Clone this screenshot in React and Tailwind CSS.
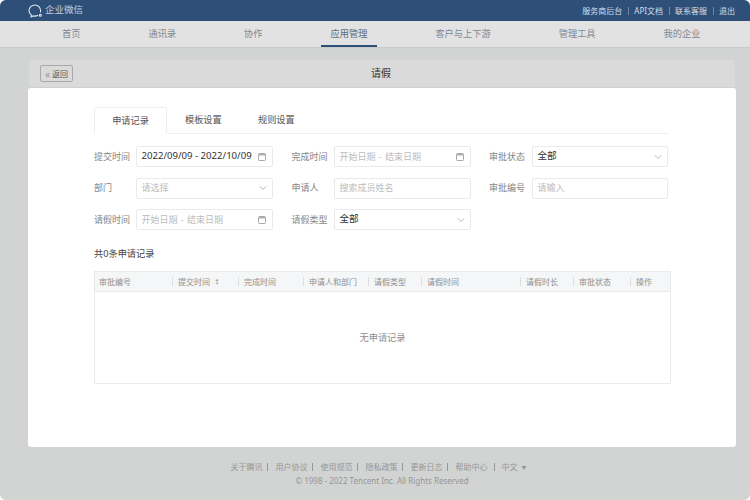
import { ChevronDown } from 'lucide-react'

const nav = ['首页', '通讯录', '协作', '应用管理', '客户与上下游', '管理工具', '我的企业']
const topLinks = ['服务商后台', 'API文档', '联系客服', '退出']
const tabs = ['申请记录', '模板设置', '规则设置']
const footerLinks = ['关于腾讯', '用户协议', '使用规范', '隐私政策', '更新日志', '帮助中心']

const columns = [
  { label: '审批编号', w: 'w-[77px]' },
  { label: '提交时间', w: 'w-[66px]', sort: true },
  { label: '完成时间', w: 'w-[65px]' },
  { label: '申请人和部门', w: 'w-[65px]' },
  { label: '请假类型', w: 'w-[53px]' },
  { label: '请假时间', w: 'w-[99px]' },
  { label: '请假时长', w: 'w-[53px]' },
  { label: '审批状态', w: 'w-[57px]' },
  { label: '操作', w: 'flex-1' },
]

function Logo() {
  return (
    <svg width="16" height="14" viewBox="0 0 16 14" fill="none" stroke="#dfe6ee" strokeWidth="1.1">
      <path d="M10 11.300c-.9.500-2 .8-3.200.8-.6 0-1.200-.1-1.800-.2l-1.900 1 .2-1.900C1.800 9.900 1 8.400 1 6.700 1 3.600 3.600 1 6.800 1s5.800 2.600 5.800 5.700c0 .6-.1 1.100-.3 1.700" />
      <circle cx="12.300" cy="11.300" r="1" />
    </svg>
  )
}

function CalendarIcon() {
  return (
    <svg width="8" height="8" viewBox="0 0 8 8" fill="none" className="shrink-0">
      <rect x="0.500" y="0.500" width="7" height="7" rx="0.800" stroke="#a8a8a8" />
      <rect x="1" y="1" width="6" height="1.500" fill="#b0b0b0" />
    </svg>
  )
}

function Field({ label, value, placeholder, icon, labelW = 'w-[42px]' }) {
  return (
    <div className="flex items-center">
      <span className={`${labelW} shrink-0 text-[9px] text-[#858585]`}>{label}</span>
      <div className="flex h-[21px] flex-1 items-center justify-between rounded-[2px] border border-[#e8eaec] bg-white pl-[4.500px] pr-[6px]">
        <span className={value ? 'text-[9.600px] text-[#333]' : 'text-[9px] text-[#bcbcbc] [word-spacing:1px]'}>{value || placeholder}</span>
        {icon === 'date' && <CalendarIcon />}
        {icon === 'select' && <ChevronDown size={12} strokeWidth={1.2} className="mr-[-3px] shrink-0 text-[#888]" />}
      </div>
    </div>
  )
}

export default function App() {
  return (
    <div className="flex h-[500px] w-[750px] flex-col overflow-hidden rounded-[6px] bg-[#d2d4d3] font-['Noto_Sans','Noto_Sans_CJK_SC',sans-serif]">
      <header className="flex h-[21px] shrink-0 items-center justify-between bg-[#2e5078] pl-[28px] pr-[15px]">
        <div className="flex items-center text-[9.500px] text-[#c3cedb]">
          <Logo />
          <span className="ml-px">企业微信</span>
        </div>
        <div className="flex items-center text-[8px] text-[#d5dde6]">
          {topLinks.map((t, i) => (
            <span key={t} className="flex items-center">
              {i > 0 && <span className="mx-[5.500px] h-[8px] w-px bg-[#6d88a6]" />}
              {t}
            </span>
          ))}
        </div>
      </header>

      <nav className="flex h-[26px] shrink-0 gap-[48px] bg-[#e2e2e2] pl-[52px] shadow-[0_1px_0_#c9cbca]">
        {nav.map((n) => (
          <div
            key={n}
            className={`flex items-center border-b-2 px-[10px] pt-[2px] text-[9.230px] ${n === '应用管理' ? 'border-[#2e5078] text-[#5c6c7e]' : 'border-transparent text-[#7f8993]'}`}
          >
            {n}
          </div>
        ))}
      </nav>

      <main className="ml-[28px] mr-[14px] mt-[13px] flex h-[387px] shrink-0 flex-col">
        <div className="mx-px flex h-[28px] shrink-0 items-center rounded-t-[2px] border-b border-[#cfd0d0] bg-[#dadada] pl-[11px]">
          <button className="flex h-[17px] w-[33px] items-center justify-center gap-[2px] rounded-[2px] border border-[#a9a9a9] text-[8px] text-[#555]">
            <span className="text-[10px] leading-none text-[#999]">«</span>返回
          </button>
          <h1 className="flex-1 pr-[46px] text-center text-[10px] text-[#333]">请假</h1>
        </div>

        <div className="flex-1 rounded-[3px] bg-white pl-[66px] pt-[19px]">
          <div className="flex h-[27px] w-[575px] border-b border-[#eceef0]">
            {tabs.map((t, i) => (
              <div
                key={t}
                className={`flex items-center text-[9.200px] text-[#555] ${i === 0 ? 'mb-[-1px] w-[73px] justify-center rounded-t-[2px] border border-b-white border-[#eceef0] bg-white' : i === 1 ? 'ml-[18px] w-[37px]' : 'ml-[36px] w-[37px]'}`}
              >
                {t}
              </div>
            ))}
          </div>

          <div className="mt-[12px] grid w-[574px] grid-cols-[179px_179px_179px] gap-x-[18.500px] gap-y-[10.500px]">
            <Field label="提交时间" value="2022/09/09 - 2022/10/09" icon="date" />
            <Field label="完成时间" labelW="w-[42.500px]" placeholder="开始日期 - 结束日期" icon="date" />
            <Field label="审批状态" labelW="w-[43px]" value="全部" icon="select" />
            <Field label="部门" placeholder="请选择" icon="select" />
            <Field label="申请人" labelW="w-[42.500px]" placeholder="搜索成员姓名" />
            <Field label="审批编号" labelW="w-[43px]" placeholder="请输入" />
            <Field label="请假时间" placeholder="开始日期 - 结束日期" icon="date" />
            <Field label="请假类型" labelW="w-[42.500px]" value="全部" icon="select" />
          </div>

          <p className="mt-[17px] text-[9.200px] leading-[13px] text-[#444]">共0条申请记录</p>

          <div className="mt-[11px] flex h-[113px] w-[577px] flex-col border border-[#e8eaec]">
            <div className="flex h-[20px] shrink-0 items-center border-b border-[#e8eaec] bg-[#f5f6f8]">
              {columns.map((c, i) => (
                <div key={c.label} className={`${c.w} flex items-center text-[8px] text-[#8f8f8f]`}>
                  {i > 0 && <span className="mr-[5px] h-[9px] w-px bg-[#dcdfe3]" />}
                  <span className={i === 0 ? 'pl-[4px]' : ''}>{c.label}</span>
                  {c.sort && <span className="ml-[4px] text-[6px] leading-none text-[#777]">↕</span>}
                </div>
              ))}
            </div>
            <div className="flex flex-1 items-center justify-center text-[9.200px] text-[#8f8f8f]">无申请记录</div>
          </div>
        </div>
      </main>

      <footer className="ml-[28px] mr-[14px] flex flex-1 flex-col items-center pt-[13px] text-[8px] leading-[14px] text-[#959696]">
        <div className="flex items-center pr-[7px]">
          {footerLinks.map((t, i) => (
            <span key={t} className="flex items-center">
              {t}
              <span className={`ml-[5px] h-[8px] w-px bg-[#959696] ${i === 5 ? 'ml-[7px] mr-[6px]' : 'mr-[7px]'}`} />
            </span>
          ))}
          中文<span className="ml-[4px] text-[5px]">▼</span>
        </div>
        <div>© 1998 - 2022 Tencent Inc. All Rights Reserved</div>
      </footer>
    </div>
  )
}
